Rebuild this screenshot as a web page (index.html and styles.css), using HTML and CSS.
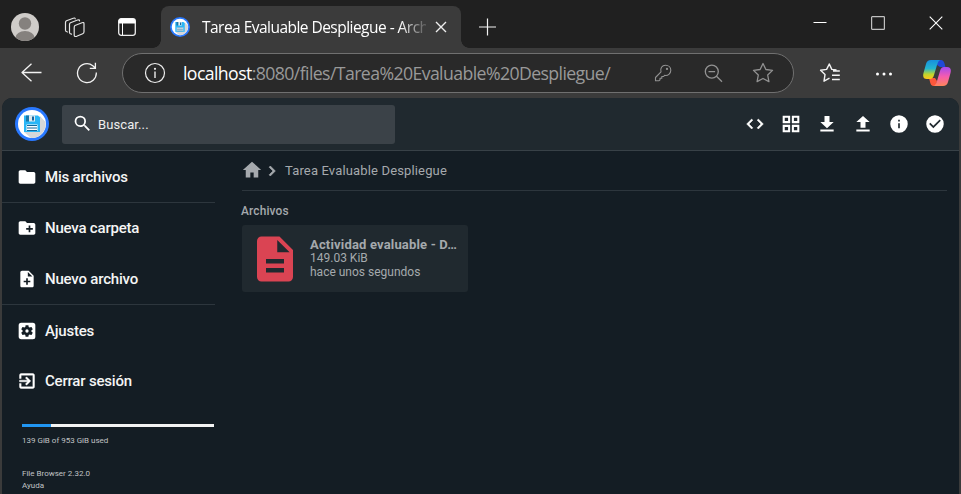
FILE: index.html
```html
<!DOCTYPE html>
<html lang="es">
<head>
<meta charset="utf-8">
<title>Tarea Evaluable Despliegue - Archivos</title>
<link rel="stylesheet" href="styles.css">
</head>
<body>
<svg width="0" height="0" class="defs">
  <defs>
    <symbol id="logo" viewBox="0 0 34 34">
      <circle cx="17" cy="17" r="17" fill="#2979ff"/><circle cx="17" cy="17" r="14" fill="#fff"/>
      <path d="M25 9l5.500 6A14 14 0 0 1 16 31l-7-6z" fill="#d5d7d9"/>
      <path d="M9 8.500h14l2 2V25H9z" fill="#29b6f6"/>
      <path d="M14 8.500h6v6h-6z" fill="#dfe9ee"/><path d="M11 8.500h3v6h-3z" fill="#1976a8"/><path d="M17 9.500h2v4h-2z" fill="#1565a0"/>
      <path d="M11.500 17.500h11V24h-11z" fill="#fff"/><path d="M12 18.500h10M12 21h10M12 23.500h10" stroke="#12679a"/>
    </symbol>
  </defs>
</svg>
<div class="window">
  <div class="titlebar">
    <div class="avatar"><svg width="28" height="28"><clipPath id="ac"><circle cx="14" cy="14" r="14"/></clipPath><g clip-path="url(#ac)"><path fill="#cfccc9" d="M0 0h28v28H0z"/><circle cx="14" cy="10.500" r="6.200" fill="#85817e"/><ellipse cx="14" cy="24.500" rx="9.500" ry="6.500" fill="#85817e"/></g></svg></div>
    <svg class="workspaces" width="22" height="22" fill="none" stroke="#e4e4e4" stroke-width="1.200" stroke-linejoin="round" stroke-linecap="round"><path d="M11 8.500l7-2.800q2-.7 2 1v8q0 1.500-1.300 2l-6 2.600q-2.500.7-2.500-1v-7.500q0-1.800.8-2.300z"/><path d="M7.500 17.200q-2-.2-2-1.700V7.500q0-1.300 1-1.700L13.500 3q2-.6 2 .8"/><path d="M3.500 15q-2-.2-2-1.700V5.500q0-1.300 1-1.700L9.300 1.200q1.800-.6 1.900.6"/></svg>
    <svg class="tabactions" width="18" height="18"><rect x=".7" y=".7" width="16.600" height="16.600" rx="2.500" fill="none" stroke="#ededed" stroke-width="1.300"/><path d="M1 5V3q0-2 2-2h12q2 0 2 2v2zM4.500 5v12" fill="#fff" stroke="#fff" stroke-width="1"/></svg>
    <div class="tab">
      <svg class="favicon" width="20" height="20"><use href="#logo"/></svg>
      <span class="tab-title">Tarea Evaluable Despliegue - Arch</span>
      <svg width="12" height="12" stroke="#eee" stroke-width="1.400"><path d="M1 1l10 10M11 1L1 11"/></svg>
    </div>
    <svg class="plus" width="18" height="18" stroke="#f2f2f2" stroke-width="1.200"><path d="M8.500 .5v17M0 9h17"/></svg>
    <div class="controls">
      <svg width="14" height="14" stroke="#fff"><path d="M.5 6.500h13"/></svg>
      <svg width="14" height="14" fill="none" stroke="#c0c0c0" stroke-width="1.200"><rect x=".6" y=".6" width="12.800" height="12.800" rx=".7"/></svg>
      <svg width="14" height="14" stroke="#fff" stroke-width="1.100"><path d="M.7.7l12.600 12.600M13.300.7L.7 13.300"/></svg>
    </div>
  </div>
  <div class="toolbar">
    <svg class="back" width="22" height="20" fill="none" stroke="#f2f2f2" stroke-width="1.300" stroke-linejoin="round"><path d="M20.500 9.500H1M10.500.8L1 9.500l9.500 8.800"/></svg>
    <svg class="reload" width="22" height="22" fill="none" stroke="#f2f2f2" stroke-width="1.300"><path d="M20.300 10.500a9.400 9.400 0 1 1-3.500-6.700l2.500 2.300M19.400.8v5.500h-5.600"/></svg>
    <div class="address">
      <svg class="info" width="22" height="22" fill="none" stroke="#eee" stroke-width="1.200"><circle cx="11" cy="11" r="9.500"/><path d="M11 9.500V16" stroke-width="1.400"/><circle cx="11" cy="6.800" r=".5"/></svg>
      <span class="url"><b>localhost</b>:8080/files/Tarea%20Evaluable%20Despliegue/</span>
      <svg class="key" width="18" height="18" fill="none" stroke="#929292" stroke-width="1.100" stroke-linejoin="round"><path d="M7 7.800C5.900 4.300 8 1.200 11.500 1.200c3 0 5.300 2 5.300 5 0 3.500-3 5.800-6.200 5.100l-1 1.200H7.800v1.800H6v1.500l-.9.900H1.500v-3.200z"/><circle cx="13" cy="4.900" r=".6"/></svg>
      <svg class="zoomout" width="19" height="19" fill="none" stroke="#929292" stroke-width="1.300"><circle cx="7.800" cy="7.600" r="6.500"/><path d="M4.500 7.600h6.600M12.500 12.300l5.500 5.500"/></svg>
      <svg class="star" width="22" height="22" fill="none" stroke="#929292" stroke-width="1.300" stroke-linejoin="round"><path d="M11 1.500l2.900 6 6.600.9-4.800 4.600 1.200 6.600-5.900-3.100-5.900 3.100L6.300 13 1.500 8.400l6.600-.9z"/></svg>
    </div>
    <svg class="favs" width="22" height="22" fill="none" stroke="#f4f4f4" stroke-width="1.400" stroke-linejoin="round"><path d="M17.500 8l-4.700-.6L10.300 2 7.600 7.400l-6 .9L6 12.600 5 19.200l5.500-3M14 9h6.800M13 13.200h7.800M13 17.500h7.800"/></svg>
    <svg class="more" width="18" height="4" fill="#fff"><circle cx="2.500" cy="2" r="1.500"/><circle cx="9" cy="2" r="1.500"/><circle cx="15.500" cy="2" r="1.500"/></svg>
    <svg class="copilot" width="28" height="26" viewBox="0 0 28 26"><defs><linearGradient id="a" x2="0" y2="1"><stop stop-color="#168fdf"/><stop offset=".45" stop-color="#24b6cf"/><stop offset=".75" stop-color="#c1d52c"/><stop offset="1" stop-color="#ffc51b"/></linearGradient><linearGradient id="b" x2="0" y2="1"><stop stop-color="#a54af0"/><stop offset=".5" stop-color="#f55cae"/><stop offset="1" stop-color="#ff855a"/></linearGradient></defs><path fill="#2049d6" d="M13 0h5q2.500 0 3.500 3.500L22.500 7H17l-3-2z"/><path fill="#fc573b" d="M6 18h6l2 3-1 5H10q-2 0-2.700-3z"/><path fill="url(#a)" d="M8 0h9q-2 1-3 5l-3 10q-1 4-4 4H4q-5 0-3.500-6L3 4q1-4 5-4z"/><path fill="url(#b)" d="M20 26h-9q2-1 3-5l3-10q1-4 4-4h3q5 0 3.500 6L25 22q-1 4-5 4z"/></svg>
  </div>
  <div class="app">
    <header class="header">
      <svg class="logo" width="34" height="34"><use href="#logo"/></svg>
      <div class="search"><svg width="21" height="21" viewBox="0 0 24 24"><path fill="#fff" d="M15.500 14h-.79l-.28-.27A6.470 6.470 0 0 0 16 9.500 6.500 6.500 0 1 0 9.500 16c1.610 0 3.090-.59 4.230-1.570l.27.28v.79l5 4.990L20.490 19l-4.990-5zm-6 0a4.500 4.500 0 1 1 0-9 4.500 4.500 0 0 1 0 9z"/></svg><span>Buscar...</span></div>
      <div class="actions">
        <svg viewBox="0 0 24 24"><path d="M9.400 16.600L4.800 12l4.600-4.600L8 6l-6 6 6 6zm5.200 0l4.600-4.600-4.600-4.600L16 6l6 6-6 6z" stroke="#fff" stroke-width=".6"/></svg>
        <svg viewBox="0 0 24 24"><path fill-rule="evenodd" d="M2 2h9v9H2zm2.500 2.500v4h4v-4zM13 2h9v9h-9zm2.500 2.500v4h4v-4zM2 13h9v9H2zm2.500 2.500v4h4v-4zM13 13h9v9h-9zm2.500 2.500v4h4v-4z"/></svg>
        <svg viewBox="0 0 24 24"><path d="M20 9.500h-5V2.500H9v7H4l8 7.500zM4 18.500v2.500h16v-2.500z"/></svg>
        <svg viewBox="0 0 24 24"><path d="M9 16.500h6v-7h5l-8-7-8 7h5zM4 18.500h16V21H4z"/></svg>
        <svg viewBox="0 0 24 24"><path d="M12 1.500a10.500 10.500 0 1 0 0 21 10.500 10.500 0 0 0 0-21zm1 15.500h-2v-6h2zm0-8h-2V7h2z"/></svg>
        <svg viewBox="0 0 24 24"><path d="M12 1.500a10.500 10.500 0 1 0 0 21 10.500 10.500 0 0 0 0-21zM10 17l-5-5 1.410-1.410L10 14.170l7.590-7.590L19 8z"/></svg>
      </div>
    </header>
    <div class="body">
      <nav class="sidebar">
        <div class="group first"><a><svg viewBox="0 0 24 24"><path d="M10 4H4c-1.100 0-2 .9-2 2v12c0 1.100.9 2 2 2h16c1.100 0 2-.9 2-2V8c0-1.100-.9-2-2-2h-8z"/></svg>Mis archivos</a></div>
        <div class="group"><a><svg viewBox="0 0 24 24"><path d="M20 6h-8l-2-2H4c-1.110 0-2 .89-2 2v12c0 1.110.89 2 2 2h16c1.110 0 2-.89 2-2V8c0-1.110-.89-2-2-2zm-1 8h-3v3h-2v-3h-3v-2h3V9h2v3h3z"/></svg>Nueva carpeta</a>
        <a><svg viewBox="0 0 24 24"><path d="M14 2H6c-1.100 0-2 .9-2 2v16c0 1.100.89 2 2 2h12c1.100 0 2-.9 2-2V8zm2 14h-3v3h-2v-3H8v-2h3v-3h2v3h3zm-3-7V3.500L18.500 9z"/></svg>Nuevo archivo</a></div>
        <div class="group last"><a><svg viewBox="0 0 24 24"><path d="M12 10a2 2 0 1 0 0 4 2 2 0 0 0 0-4zm7-8H5a3 3 0 0 0-3 3v14c0 1.700 1.300 3 3 3h14a3 3 0 0 0 3-3V5a3 3 0 0 0-3-3zm-1.750 10c0 .23-.02.46-.05.680l1.480 1.160c.13.110.17.300.08.450l-1.400 2.420c-.09.150-.27.210-.43.150l-1.740-.7c-.36.280-.76.510-1.180.690l-.26 1.850c-.03.170-.18.300-.35.300h-2.800c-.17 0-.32-.13-.35-.29l-.26-1.850c-.43-.18-.82-.41-1.180-.69l-1.740.7c-.16.060-.34 0-.43-.15l-1.400-2.420a.35.350 0 0 1 .08-.45l1.480-1.160a5.500 5.500 0 0 1 0-1.370l-1.480-1.160a.35.350 0 0 1-.08-.45l1.400-2.420c.09-.15.270-.21.430-.15l1.740.7c.36-.28.76-.51 1.180-.69l.26-1.850c.03-.17.180-.3.350-.3h2.800c.17 0 .32.130.350.290l.26 1.850c.43.180.82.410 1.180.690l1.740-.7c.16-.06.340 0 .430.150l1.400 2.420c.09.150.05.340-.08.450l-1.480 1.160c.03.230.05.460.050.690z"/></svg>Ajustes</a>
        <a><svg viewBox="0 0 24 24"><path stroke="#fff" stroke-width=".5" d="M10.090 15.590L11.500 17l5-5-5-5-1.410 1.410L12.670 11H3v2h9.670zM19 3H5a2 2 0 0 0-2 2v4h2V5h14v14H5v-4H3v4a2 2 0 0 0 2 2h14c1.100 0 2-.9 2-2V5c0-1.100-.9-2-2-2z"/></svg>Cerrar sesión</a></div>
        <div class="usage"><div class="bar"><div class="used"></div></div><div>139 GiB of 953 GiB used</div></div>
        <div class="credits"><div>File Browser 2.32.0</div><div>Ayuda</div></div>
      </nav>
      <main class="main">
        <div class="crumbs"><svg class="home" width="20" height="20" viewBox="0 0 24 24"><path d="M10 21v-6h4v6h5.500v-9H23L12 2 1 12h3.500v9z"/></svg><svg class="chev" width="20" height="20" viewBox="0 0 24 24"><path d="M10 6L8.590 7.410 13.170 12l-4.580 4.590L10 18l6-6z" stroke="#a5a9ad" stroke-width=".8"/></svg><span>Tarea Evaluable Despliegue</span></div>
        <h2>Archivos</h2>
        <div class="card">
          <svg width="54" height="54" viewBox="0 0 24 24"><path fill="#da4453" d="M14 2H6c-1.100 0-2 .9-2 2v16c0 1.100.9 2 2 2h12c1.100 0 2-.9 2-2V8zm2 16H8v-2h8zm0-4H8v-2h8zm-3-5V3.500L18.500 9z"/></svg>
          <div class="meta"><b>Actividad evaluable - D…</b><span>149.03 KiB</span><span>hace unos segundos</span></div>
        </div>
      </main>
    </div>
  </div>
</div>
</body>
</html>
```

FILE: styles.css
```css
* { box-sizing: border-box; }
body { margin: 0; background: #3b3b3b; font-family: Roboto, sans-serif; }
svg { display: block; flex: none; }
.defs { position: absolute; }
.window { width: 961px; height: 494px; overflow: hidden; display: flex; flex-direction: column; }
.titlebar { height: 48px; flex: none; display: flex; background: #202020; }
.avatar { margin: 13px 0 0 11px; }
.workspaces { margin: 17px 0 0 25px; }
.tabactions { margin: 18px 0 0 32px; }
.tab { position: relative; width: 300px; height: 42px; margin: 6px 0 0 25px; padding: 0 14px 0 9px; display: flex; align-items: center; background: #3b3b3b; border-radius: 8px 8px 0 0; }
.tab::before, .tab::after { content: ""; position: absolute; bottom: 0; width: 8px; height: 8px; }
.tab::before { left: -8px; background: radial-gradient(circle at 0 0, #202020 7.5px, #3b3b3b 8px); }
.tab::after { right: -8px; background: radial-gradient(circle at 100% 0, #202020 7.5px, #3b3b3b 8px); }
.tab-title { width: 224px; margin: 0 9px 0 12px; white-space: nowrap; font: 15.5px "Open Sans", sans-serif; letter-spacing: -.53px; color: #fff; -webkit-mask-image: linear-gradient(90deg, #000 88%, rgba(0, 0, 0, .15)); mask-image: linear-gradient(90deg, #000 88%, rgba(0, 0, 0, .15)); }
.plus { margin: 18px 0 0 18px; }
.controls { display: flex; gap: 44px; margin: 16px 18px 0 auto; }
.toolbar { height: 50px; flex: none; display: flex; align-items: flex-start; }
.back { margin: 15px 0 0 21px; }
.reload { margin: 14px 0 0 33px; }
.address { width: 672px; height: 40px; margin: 5px 0 0 24px; padding-left: 21px; display: flex; align-items: center; background: #292929; border: 1px solid #707070; border-radius: 20px; }
.url { width: 450px; margin: 0 0 1px 17px; white-space: nowrap; font: 17.7px "Open Sans", sans-serif; letter-spacing: -.6px; color: #999; }
.url b { font-weight: 400; color: #fff; }
.key { margin-left: 21px; }
.zoomout { margin-left: 32px; }
.star { margin-left: 29px; }
.favs { margin: 14px 0 0 25px; }
.more { margin: 24px 0 0 34px; }
.copilot { margin: 12px 0 0 30px; }
.app { width: 957px; height: 396px; flex: none; margin-left: 2px; background: #141d24; border-radius: 10px 10px 0 0; overflow: hidden; }
.header { height: 53px; display: flex; align-items: center; padding: 0 14px 0 13px; background: #20292f; border-bottom: 1px solid #384147; }
.search { width: 333px; height: 39px; margin-left: 13px; padding-left: 10px; display: flex; align-items: center; gap: 5px; background: #3b4248; border-radius: 3px; color: #eee; font-size: 13px; letter-spacing: .1px; }
.search svg { margin-top: -1px; }
.actions { margin-left: auto; display: flex; gap: 16px; }
.actions svg { width: 20px; height: 20px; fill: #fff; }
.body { display: flex; height: 343px; }
.sidebar { width: 213px; flex: none; color: #f4f5f5; }
.group { border-bottom: 1px solid #2d363d; }
.group a { height: 51px; display: flex; align-items: center; gap: 8px; padding-left: 15px; font-size: 15px; font-weight: 500; letter-spacing: -.2px; }
.group svg { width: 20px; height: 20px; fill: #fff; }
.group.last { border: 0; height: 101px; }
.group.last a { height: 50px; padding-top: 2px; }
.group:nth-child(2) a { height: 50.5px; }
.usage { margin: 18px 1px 0 20px; font-size: 8px; line-height: 10px; color: #c0c3c5; }
.bar { height: 3px; margin-bottom: 9px; background: #f3f3f3; }
.used { width: 15%; height: 100%; background: #2196f3; }
.credits { margin: 22px 0 0 20px; font-size: 8px; line-height: 12px; color: #c0c3c5; }
.main { margin-left: 27px; width: 705px; color: #a5a9ad; }
.crumbs { height: 40px; display: flex; align-items: center; border-bottom: 1px solid #2d363d; font-size: 13px; letter-spacing: .15px; }
.crumbs svg { fill: #a5a9ad; }
.crumbs .home { margin-top: -2px; }
.crumbs span { margin-left: 3px; }
h2 { margin: 13px 0 7px -1px; font-size: 11.9px; line-height: 14px; font-weight: 500; letter-spacing: .15px; }
.card { width: 226px; height: 67px; display: flex; align-items: center; padding: 0 9px 0 6px; background: #20292f; border-radius: 3px; }
.meta { min-width: 0; margin-left: 8px; display: flex; flex-direction: column; font-size: 12px; line-height: 14px; }
.meta b { white-space: nowrap; font-size: 13px; line-height: 13px; letter-spacing: .17px; }
```
